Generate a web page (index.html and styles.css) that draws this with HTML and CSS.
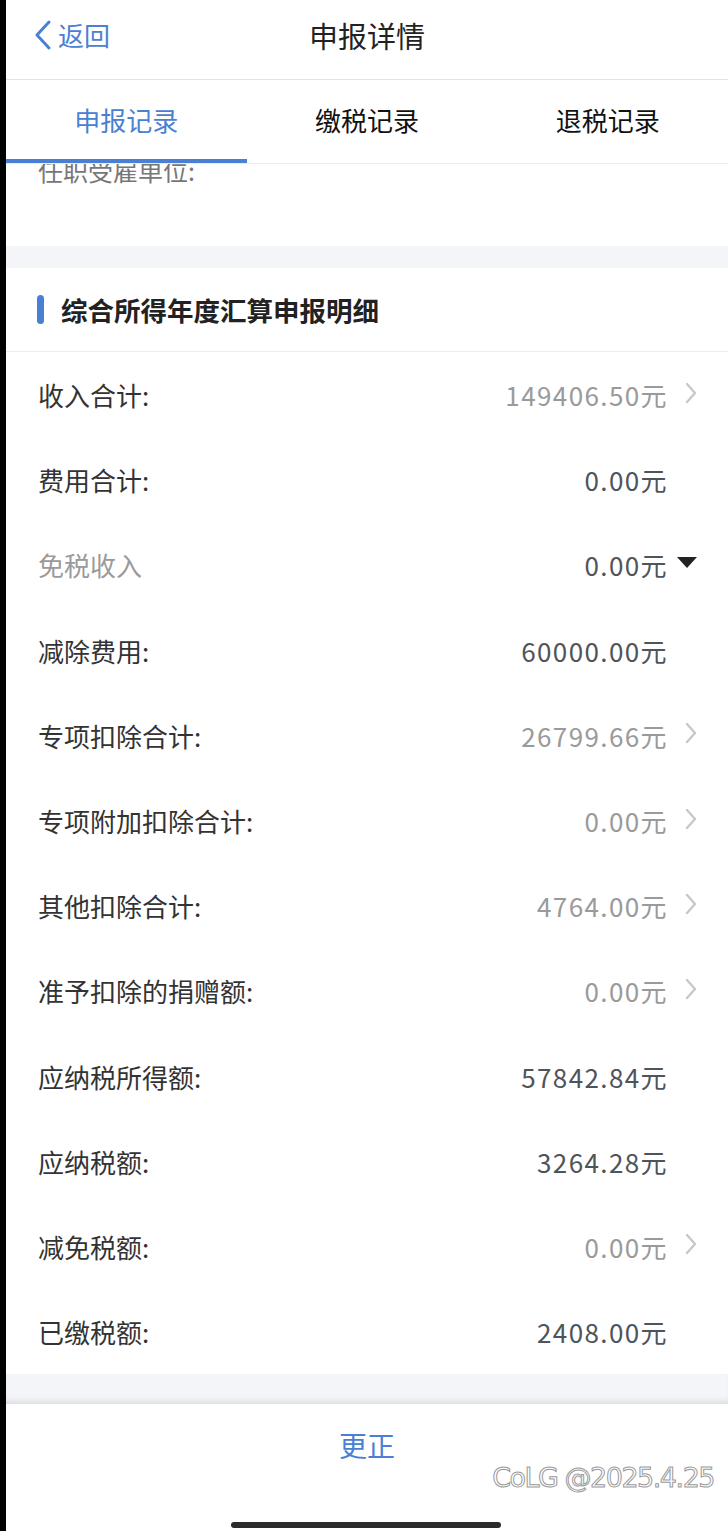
FILE: index.html
```html
<!DOCTYPE html>
<html lang="zh-CN">
<head>
  <meta charset="UTF-8" />
  <meta name="viewport" content="width=device-width, initial-scale=1.0"/>
  <title>申报详情</title>
  <link rel="stylesheet" href="styles.css">
</head>
<body>
  <div class="phone">

    <header class="nav">
      <a class="back" href="#">
        <svg width="18" height="30" viewBox="0 0 18 30"><path d="M15 2 L3 15 L15 28" fill="none" stroke="#4a80d4" stroke-width="3" stroke-linecap="round" stroke-linejoin="round"/></svg>
        <span>返回</span>
      </a>
      <h1>申报详情</h1>
    </header>

    <nav class="tabs">
      <div class="tab active">申报记录</div>
      <div class="tab">缴税记录</div>
      <div class="tab">退税记录</div>
    </nav>

    <div class="prev-card">
      <p class="cut-row">任职受雇单位:</p>
    </div>

    <div class="gap"></div>

    <section class="detail">
      <h2 class="sec-title">综合所得年度汇算申报明细</h2>

      <div class="row">
        <span class="label">收入合计:</span>
        <span class="value link">149406.50元</span>
        <span class="arrow"><svg class="chev" width="12" height="22" viewBox="0 0 12 22"><path d="M2 2 L10 11 L2 20" /></svg></span>
      </div>
      <div class="row">
        <span class="label">费用合计:</span>
        <span class="value">0.00元</span>
        <span class="arrow"></span>
      </div>
      <div class="row">
        <span class="label muted">免税收入</span>
        <span class="value">0.00元</span>
        <span class="arrow"><svg width="20" height="11" viewBox="0 0 20 11"><path d="M0 0 H20 L10 11 Z" fill="#222"/></svg></span>
      </div>
      <div class="row">
        <span class="label">减除费用:</span>
        <span class="value">60000.00元</span>
        <span class="arrow"></span>
      </div>
      <div class="row">
        <span class="label">专项扣除合计:</span>
        <span class="value link">26799.66元</span>
        <span class="arrow"><svg class="chev" width="12" height="22" viewBox="0 0 12 22"><path d="M2 2 L10 11 L2 20" /></svg></span>
      </div>
      <div class="row">
        <span class="label">专项附加扣除合计:</span>
        <span class="value link">0.00元</span>
        <span class="arrow"><svg class="chev" width="12" height="22" viewBox="0 0 12 22"><path d="M2 2 L10 11 L2 20" /></svg></span>
      </div>
      <div class="row">
        <span class="label">其他扣除合计:</span>
        <span class="value link">4764.00元</span>
        <span class="arrow"><svg class="chev" width="12" height="22" viewBox="0 0 12 22"><path d="M2 2 L10 11 L2 20" /></svg></span>
      </div>
      <div class="row">
        <span class="label">准予扣除的捐赠额:</span>
        <span class="value link">0.00元</span>
        <span class="arrow"><svg class="chev" width="12" height="22" viewBox="0 0 12 22"><path d="M2 2 L10 11 L2 20" /></svg></span>
      </div>
      <div class="row">
        <span class="label">应纳税所得额:</span>
        <span class="value">57842.84元</span>
        <span class="arrow"></span>
      </div>
      <div class="row">
        <span class="label">应纳税额:</span>
        <span class="value">3264.28元</span>
        <span class="arrow"></span>
      </div>
      <div class="row">
        <span class="label">减免税额:</span>
        <span class="value link">0.00元</span>
        <span class="arrow"><svg class="chev" width="12" height="22" viewBox="0 0 12 22"><path d="M2 2 L10 11 L2 20" /></svg></span>
      </div>
      <div class="row">
        <span class="label">已缴税额:</span>
        <span class="value">2408.00元</span>
        <span class="arrow"></span>
      </div>
    </section>

    <div class="gap bottom-gap"></div>

    <footer class="actions">
      <a class="fix-btn" href="#">更正</a>
      <span class="watermark">CoLG @2025.4.25</span>
      <span class="home-bar"></span>
    </footer>

  </div>
</body>
</html>
```

FILE: styles.css
```css
* {
  box-sizing: border-box;
}
body {
  margin: 0;
  background: #000;
  font-family: "Noto Sans CJK SC", "Noto Sans", sans-serif;
  color: #333;
}
.phone {
  margin-left: 6px;
  width: 722px;
  height: 1531px;
  background: #fff;
  position: relative;
  overflow: hidden;
}

/* top bar */
.nav {
  height: 80px;
  display: flex;
  align-items: center;
  justify-content: center;
  position: relative;
  border-bottom: 1px solid #e3e3e3;
}
.nav h1 {
  margin: 0;
  font-size: 29px;
  font-weight: 400;
  color: #222;
  padding-bottom: 9px;
}
.back {
  position: absolute;
  left: 28px;
  top: 16px;
  display: flex;
  align-items: center;
  gap: 6px;
  color: #4a80d4;
  text-decoration: none;
  font-size: 26px;
}

/* tabs */
.tabs {
  display: grid;
  grid-template-columns: repeat(3, 1fr);
  height: 84px;
  border-bottom: 1px solid #ececec;
}
.tab {
  display: flex;
  align-items: center;
  justify-content: center;
  font-size: 26px;
  color: #111;
  padding-bottom: 4px;
}
.tab.active {
  color: #4a80d4;
  border-bottom: 4px solid #4a80d4;
  padding-bottom: 0;
}

.prev-card {
  height: 82px;
  overflow: hidden;
}
.cut-row {
  margin: -12px 0 0 32px;
  font-size: 25px;
  color: #777;
}

.gap {
  height: 22px;
  background: #f4f5f8;
}

/* detail list */
.sec-title {
  margin: 0;
  height: 84px;
  display: flex;
  align-items: center;
  padding-left: 31px;
  font-size: 26.5px;
  font-weight: 700;
  color: #222;
  border-bottom: 1px solid #ececec;
}
.sec-title::before {
  content: "";
  width: 7px;
  height: 29px;
  border-radius: 4px;
  background: #4a80d4;
  margin-right: 17px;
}
.row {
  height: 85.2px;
  display: flex;
  align-items: center;
  padding: 0 31px 0 32px;
  font-size: 26px;
}
.label {
  flex: 1;
  color: #333;
}
.label.muted {
  color: #9a9a9a;
}
.value {
  color: #4f545a;
  letter-spacing: 1.4px;
}
.value.link {
  color: #9a9a9a;
}
.arrow {
  width: 29px;
  display: flex;
  justify-content: flex-end;
  align-items: center;
  padding-bottom: 4px;
}
.chev path {
  fill: none;
  stroke: #c8c8cc;
  stroke-width: 2.4;
  stroke-linecap: round;
  stroke-linejoin: round;
}

.bottom-gap {
  height: 30px;
  box-shadow: inset 0 -6px 6px -4px rgba(0, 0, 0, 0.12);
}

/* bottom action */
.actions {
  height: 126px;
  display: flex;
  justify-content: center;
  position: relative;
}
.fix-btn {
  margin-top: 21px;
  font-size: 28px;
  color: #4a80d4;
  text-decoration: none;
  height: 40px;
}
.watermark {
  position: absolute;
  right: 14px;
  top: 58px;
  font-family: "DejaVu Sans", sans-serif;
  font-size: 27px;
  color: #fff;
  -webkit-text-stroke: 1px #9a9a9a;
  letter-spacing: -1.5px;
}
.home-bar {
  position: absolute;
  left: 225px;
  bottom: 2px;
  width: 270px;
  height: 6px;
  border-radius: 3px;
  background: #2b2b2b;
}
```
